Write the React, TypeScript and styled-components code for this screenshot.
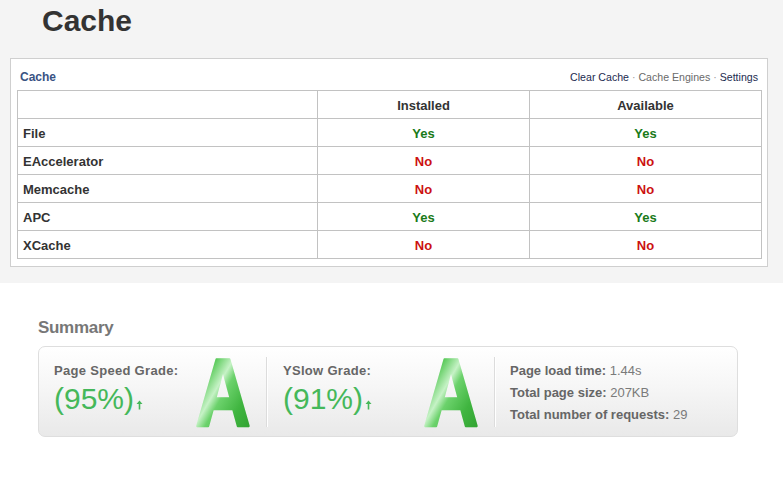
import React from "react";
import styled, { createGlobalStyle } from "styled-components";

const Global = createGlobalStyle`
  html, body { margin: 0; padding: 0; background: #ffffff; }
  body { font-family: "Liberation Sans", Arial, sans-serif; }
  * { box-sizing: border-box; }
`;

const TopSection = styled.section`
  background: #f4f4f4;
  padding: 3px 16px 17px 10px;
  height: 283px;
`;

const Title = styled.h1`
  margin: 0 0 19px 32px;
  font-size: 30px;
  line-height: 36px;
  font-weight: bold;
  color: #333333;
`;

const Panel = styled.div`
  width: 758px;
  background: #ffffff;
  border: 1px solid #cfcfcf;
  padding: 0 5px 7px 6px;
`;

const PanelHeader = styled.div`
  height: 31px;
  padding: 4px 4px 0 3px;
  display: flex;
  align-items: center;
  justify-content: space-between;
`;

const PanelTitle = styled.span`
  font-size: 12px;
  font-weight: bold;
  color: #3a5383;
`;

const Links = styled.div`
  font-size: 10.6px;
  color: #999999;
`;

const Link = styled.a<{ $muted?: boolean }>`
  color: ${(p) => (p.$muted ? "#6a6a6a" : "#1c2b50")};
  text-decoration: none;
`;

const Table = styled.table`
  width: 744px;
  border-collapse: collapse;
  table-layout: fixed;
  font-size: 13px;
  color: #333333;
`;

const Th = styled.th`
  border: 1px solid #c2c2c2;
  height: 28px;
  padding: 2px 0 0 0;
  text-align: center;
  font-weight: bold;
  vertical-align: middle;
`;

const LabelCell = styled.td`
  border: 1px solid #c2c2c2;
  height: 28px;
  padding: 2px 0 0 5px;
  font-weight: bold;
  vertical-align: middle;
`;

const StatusCell = styled.td<{ $ok: boolean }>`
  border: 1px solid #c2c2c2;
  height: 28px;
  padding: 2px 0 0 0;
  text-align: center;
  font-weight: bold;
  vertical-align: middle;
  color: ${(p) => (p.$ok ? "#197a19" : "#cc1111")};
`;

const SummarySection = styled.section`
  padding: 34px 0 0 38px;
`;

const SummaryTitle = styled.h2`
  margin: 0 0 7px 0;
  font-size: 17px;
  line-height: 22px;
  font-weight: bold;
  color: #777777;
  letter-spacing: -0.3px;
`;

const SummaryBox = styled.div`
  width: 700px;
  height: 91px;
  border: 1px solid #dedede;
  border-radius: 7px;
  background: linear-gradient(to bottom, #ffffff 0%, #f6f6f6 45%, #e9e9e9 100%);
  display: flex;
  align-items: stretch;
  padding: 10px 0 9px 15px;
`;

const GradeCol = styled.div<{ $width: number }>`
  width: ${(p) => p.$width}px;
  display: flex;
  justify-content: space-between;
`;

const GradeText = styled.div`
  padding-top: 6px;
`;

const GradeLabel = styled.div`
  font-size: 13px;
  line-height: 16px;
  font-weight: bold;
  color: #666666;
  letter-spacing: 0.3px;
`;

const Score = styled.div`
  margin-top: 3px;
  font-size: 30px;
  line-height: 34px;
  color: #45b85a;
  display: flex;
  align-items: flex-end;
`;

const Arrow = styled.svg`
  margin: 0 0 6px 2px;
`;

const BigGrade = styled.svg`
  display: block;
  overflow: visible;
`;

const Divider = styled.div`
  width: 1px;
  margin: 0 16px;
  background: #dcdcdc;
  box-shadow: 1px 0 0 #ffffff;
`;

const Stats = styled.div`
  padding-top: 6px;
  margin-left: -1px;
  display: flex;
  flex-direction: column;
  gap: 6px;
`;

const StatLine = styled.div`
  font-size: 13px;
  line-height: 16px;
  color: #7a7a7a;
`;

const StatLabel = styled.span`
  font-weight: bold;
  color: #666666;
`;

const rows: { name: string; installed: boolean; available: boolean }[] = [
  { name: "File", installed: true, available: true },
  { name: "EAccelerator", installed: false, available: false },
  { name: "Memcache", installed: false, available: false },
  { name: "APC", installed: true, available: true },
  { name: "XCache", installed: false, available: false },
];

const UpArrow = () => (
  <Arrow width="7" height="10" viewBox="0 0 7 10">
    <path d="M3.5 0.5 L6.5 4 L4.3 4 L4.3 9.5 L2.7 9.5 L2.7 4 L0.5 4 Z" fill="#45b85a" />
  </Arrow>
);

const GradeA = ({ id }: { id: string }) => (
  <BigGrade width="58" height="71" viewBox="0 0 58 71">
    <defs>
      <linearGradient id={id} x1="0" y1="0" x2="0.9" y2="1">
        <stop offset="0%" stopColor="#8fe08f" />
        <stop offset="28%" stopColor="#4fc64f" />
        <stop offset="45%" stopColor="#c6f2c6" />
        <stop offset="54%" stopColor="#6cd26c" />
        <stop offset="75%" stopColor="#40b540" />
        <stop offset="100%" stopColor="#2e9e2e" />
      </linearGradient>
    </defs>
    <text
      x="4"
      y="68.5"
      fontFamily="'Liberation Sans', Arial, sans-serif"
      fontWeight="bold"
      fontSize="96"
      fill={`url(#${id})`}
      stroke={`url(#${id})`}
      strokeWidth="2.4"
      strokeLinejoin="round"
      transform="scale(0.8 1)"
    >
      A
    </text>
  </BigGrade>
);

export default function App() {
  return (
    <>
      <Global />
      <TopSection>
        <Title>Cache</Title>
        <Panel>
          <PanelHeader>
            <PanelTitle>Cache</PanelTitle>
            <Links>
              <Link href="#">Clear Cache</Link> · <Link href="#" $muted>Cache Engines</Link> ·{" "}
              <Link href="#">Settings</Link>
            </Links>
          </PanelHeader>
          <Table>
            <colgroup>
              <col style={{ width: 300 }} />
              <col style={{ width: 212 }} />
              <col style={{ width: 232 }} />
            </colgroup>
            <thead>
              <tr>
                <Th></Th>
                <Th>Installed</Th>
                <Th>Available</Th>
              </tr>
            </thead>
            <tbody>
              {rows.map((r) => (
                <tr key={r.name}>
                  <LabelCell>{r.name}</LabelCell>
                  <StatusCell $ok={r.installed}>{r.installed ? "Yes" : "No"}</StatusCell>
                  <StatusCell $ok={r.available}>{r.available ? "Yes" : "No"}</StatusCell>
                </tr>
              ))}
            </tbody>
          </Table>
        </Panel>
      </TopSection>
      <SummarySection>
        <SummaryTitle>Summary</SummaryTitle>
        <SummaryBox>
          <GradeCol $width={196}>
            <GradeText>
              <GradeLabel>Page Speed Grade:</GradeLabel>
              <Score>
                (95%)
                <UpArrow />
              </Score>
            </GradeText>
            <GradeA id="gA1" />
          </GradeCol>
          <Divider />
          <GradeCol $width={195}>
            <GradeText>
              <GradeLabel>YSlow Grade:</GradeLabel>
              <Score>
                (91%)
                <UpArrow />
              </Score>
            </GradeText>
            <GradeA id="gA2" />
          </GradeCol>
          <Divider />
          <Stats>
            <StatLine>
              <StatLabel>Page load time:</StatLabel> 1.44s
            </StatLine>
            <StatLine>
              <StatLabel>Total page size:</StatLabel> 207KB
            </StatLine>
            <StatLine>
              <StatLabel>Total number of requests:</StatLabel> 29
            </StatLine>
          </Stats>
        </SummaryBox>
      </SummarySection>
    </>
  );
}
